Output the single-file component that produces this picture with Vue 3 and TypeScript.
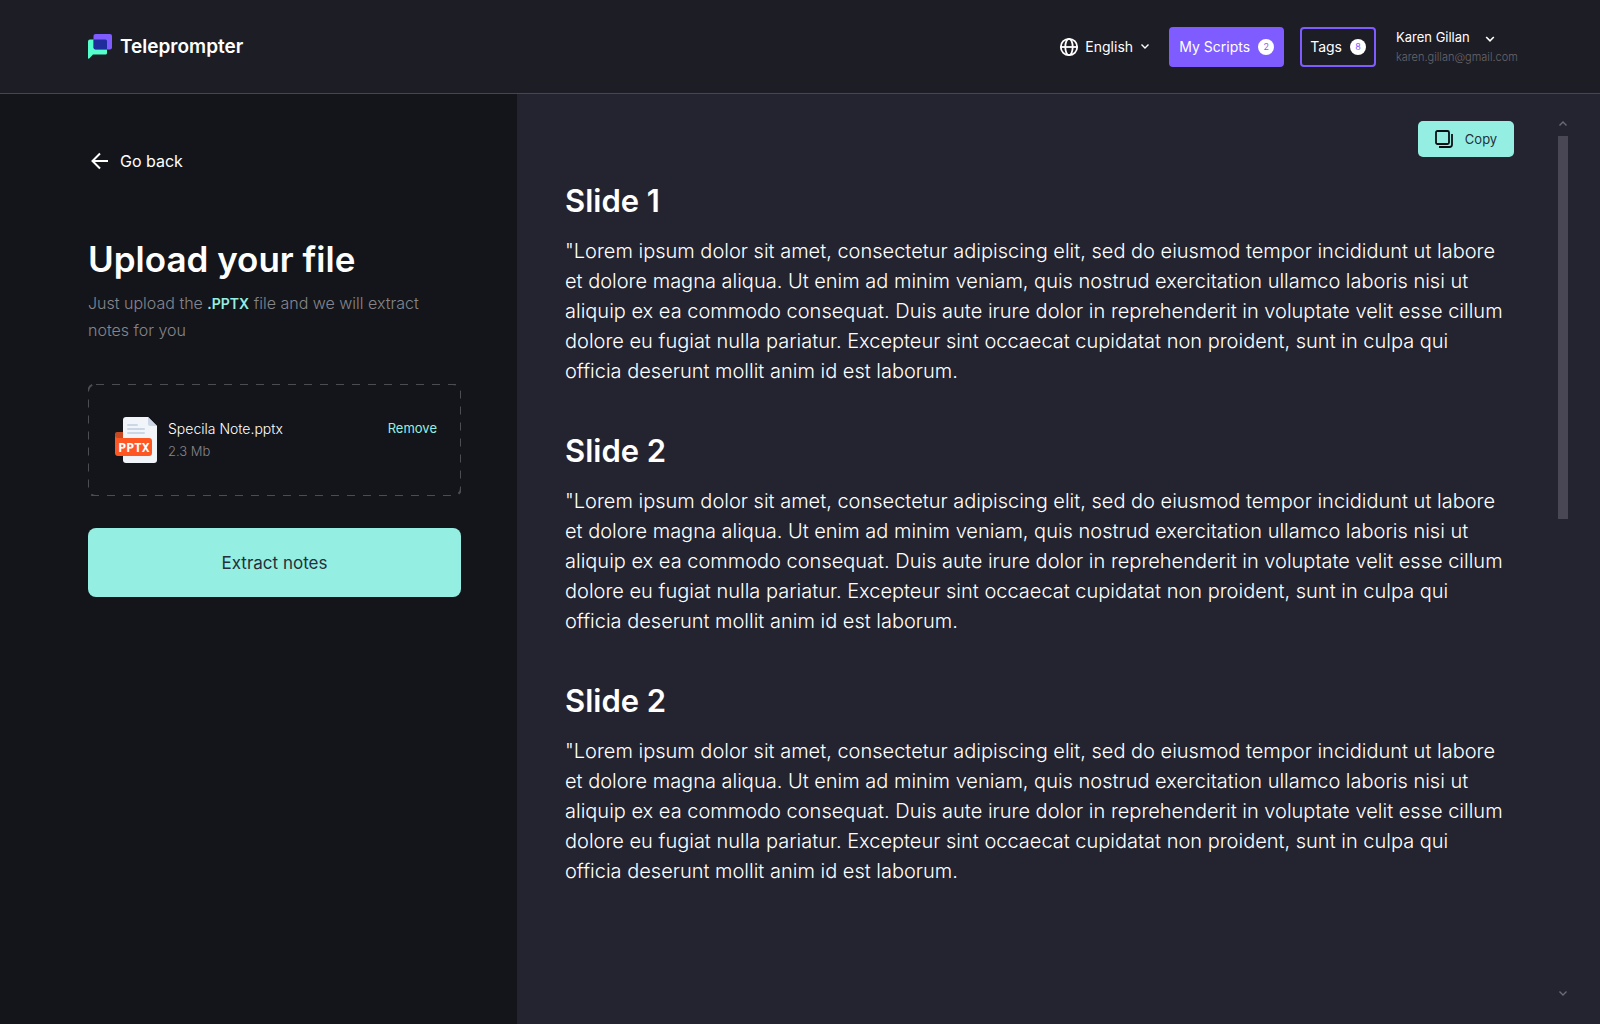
<script setup lang="ts">
interface Slide {
  id: number
  title: string
  lines: string[]
}

const notes: string[] = [
  '"Lorem ipsum dolor sit amet, consectetur adipiscing elit, sed do eiusmod tempor incididunt ut labore',
  'et dolore magna aliqua. Ut enim ad minim veniam, quis nostrud exercitation ullamco laboris nisi ut',
  'aliquip ex ea commodo consequat. Duis aute irure dolor in reprehenderit in voluptate velit esse cillum',
  'dolore eu fugiat nulla pariatur. Excepteur sint occaecat cupidatat non proident, sunt in culpa qui',
  'officia deserunt mollit anim id est laborum.',
]

const slides: Slide[] = [
  { id: 1, title: 'Slide 1', lines: notes },
  { id: 2, title: 'Slide 2', lines: notes },
  { id: 3, title: 'Slide 2', lines: notes },
]
</script>

<template>
  <div class="page">
    <header class="topbar">
      <a class="brand" href="#">
        <svg width="24" height="25" viewBox="0 0 24 25" aria-hidden="true">
          <path d="M2 5.500h15.500a1.500 1.500 0 0 1 1.500 1.500v12a1.500 1.500 0 0 1-1.500 1.500H5L1.200 24.500Q0 25 0 24V7.500a2 2 0 0 1 2-2z" fill="#54ffcb" />
          <rect x="5.500" y="0" width="18.500" height="15.500" rx="2" fill="#7f5cff" />
          <path d="M5.500 5.500H17.500a1.500 1.500 0 0 1 1.500 1.500v8.500H7.500a2 2 0 0 1-2-2z" fill="#1f2d9c" />
        </svg>
        <span>Teleprompter</span>
      </a>
      <nav class="tools">
        <label class="language">
          <svg width="20" height="20" viewBox="0 0 20 20" fill="none" stroke="#fff" stroke-width="1.800" aria-hidden="true">
            <circle cx="10" cy="10" r="8.200" />
            <ellipse cx="10" cy="10" rx="3.700" ry="8.200" />
            <path d="M2 10h16" />
          </svg>
          <select aria-label="Language">
            <option>English</option>
          </select>
          <svg width="8" height="5" viewBox="0 0 8 5" fill="none" stroke="#fff" stroke-width="1.400" aria-hidden="true">
            <path d="M.5.500 4 4 7.500.500" />
          </svg>
        </label>
        <button type="button" class="pill filled">My Scripts <span class="badge">2</span></button>
        <button type="button" class="pill">Tags <span class="badge">8</span></button>
        <button type="button" class="account">
          <span class="name">
            Karen Gillan
            <svg width="10" height="10" viewBox="0 0 10 10" fill="none" stroke="#fff" stroke-width="1.600" aria-hidden="true">
              <path d="M1.200 5 5 8.800 8.800 5" />
            </svg>
          </span>
          <span class="email">karen.gillan@gmail.com</span>
        </button>
      </nav>
    </header>

    <div class="body">
      <aside class="sidebar">
        <a class="back" href="#">
          <svg width="24" height="24" viewBox="0 0 24 24" fill="none" stroke="#fff" stroke-width="2" aria-hidden="true">
            <path d="M20 12H5M12 4.500 4.500 12l7.500 7.500" />
          </svg>
          Go back
        </a>
        <h1>Upload your file</h1>
        <p class="hint">Just upload the <strong>.PPTX</strong> file and we will extract notes for you</p>

        <div class="dropzone">
          <svg class="outline" aria-hidden="true">
            <rect x="0" y="0" width="100%" height="100%" rx="8" />
          </svg>
          <svg width="42" height="46" viewBox="0 0 42 46" aria-hidden="true">
            <path d="M0 17a2 2 0 0 1 2-2h7v10H0z" fill="#c54a22" />
            <path d="M11 0h22l9 9v34a3 3 0 0 1-3 3H11a3 3 0 0 1-3-3V3a3 3 0 0 1 3-3z" fill="#f1f5f9" />
            <path d="M33 0l9 9h-7a2 2 0 0 1-2-2z" fill="#cbd7e6" />
            <path d="M13 8h9M13 12h16M13 16h16" stroke="#cbd7e6" stroke-width="2" stroke-linecap="round" />
            <path d="M0 18a3 3 0 0 0 3 3h31a3 3 0 0 1 3 3v12a3 3 0 0 1-3 3H3a3 3 0 0 1-3-3z" fill="#ff5722" />
            <text x="19" y="35" text-anchor="middle" class="ext">PPTX</text>
          </svg>
          <div class="file">
            <span class="filename">Specila Note.pptx</span>
            <span class="filesize">2.3 Mb</span>
          </div>
          <button type="button" class="remove">Remove</button>
        </div>

        <button type="button" class="extract">Extract notes</button>
      </aside>

      <main class="notes">
        <div class="content">
          <button type="button" class="copy">
            <svg width="18" height="18" viewBox="0 0 18 18" fill="none" stroke="#0b1015" stroke-width="1.800" aria-hidden="true">
              <rect x="1" y="1" width="13" height="13" rx="1.500" />
              <path d="M17 4v10.500a2.500 2.500 0 0 1-2.500 2.500H4" />
            </svg>
            Copy
          </button>
          <section v-for="slide in slides" :key="slide.id" class="slide">
            <h2>{{ slide.title }}</h2>
            <p>{{ slide.lines.join('\n') }}</p>
          </section>
        </div>
        <div class="scrollbar" aria-hidden="true">
          <svg width="8" height="5" viewBox="0 0 8 5"><path d="M.5 4.500 4 1l3.500 3.500" /></svg>
          <div class="track"><div class="thumb"></div></div>
          <svg width="8" height="5" viewBox="0 0 8 5"><path d="M.5.500 4 4 7.500.500" /></svg>
        </div>
      </main>
    </div>
  </div>
</template>

<style>
body {
  margin: 0;
  background: #14151a;
}
</style>

<style scoped>
* {
  box-sizing: border-box;
}

.page {
  display: flex;
  flex-direction: column;
  min-height: 100vh;
  font-family: Inter, "Liberation Sans", sans-serif;
  color: #fff;
}

button,
select {
  padding: 0;
  border: 0;
  background: none;
  color: inherit;
  font: inherit;
  cursor: pointer;
}

a {
  color: inherit;
  text-decoration: none;
}

svg {
  flex: none;
  display: block;
}

.topbar {
  display: flex;
  justify-content: space-between;
  align-items: center;
  height: 94px;
  padding: 0 86px 0 88px;
  background: #1d1d25;
  border-bottom: 1px solid #46464f;
}

.brand {
  display: flex;
  align-items: center;
  gap: 8px;
  font-size: 19px;
  font-weight: 600;
}

.tools {
  display: flex;
  align-items: center;
}

.language {
  display: flex;
  align-items: center;
  gap: 6px;
  margin-right: 20px;
  font-size: 14px;
}

.language select {
  appearance: none;
  margin-right: 2px;
}

.pill {
  display: flex;
  align-items: center;
  gap: 8px;
  height: 40px;
  margin-right: 16px;
  padding: 0 8px;
  border: 2px solid #7f5cff;
  border-radius: 4px;
  font-size: 14px;
}

.pill.filled {
  background: #7f5cff;
}

.badge {
  width: 16px;
  height: 16px;
  border-radius: 50%;
  background: #fff;
  color: #7f5cff;
  font-size: 9px;
  line-height: 16px;
  text-align: center;
}

.account {
  display: flex;
  flex-direction: column;
  width: 118px;
  margin-left: 4px;
  text-align: left;
  white-space: nowrap;
}

.name {
  display: flex;
  align-items: center;
  gap: 15px;
  font-size: 13px;
  line-height: 20px;
}

.email {
  color: #66666d;
  font-size: 11px;
  font-weight: 300;
  line-height: 20px;
}

.body {
  flex: 1;
  display: flex;
}

.sidebar {
  width: 517px;
  flex: none;
  padding: 55px 56px 56px 88px;
  background: #14151a;
}

.back {
  display: inline-flex;
  align-items: center;
  gap: 8px;
  font-size: 16px;
  line-height: 24px;
}

h1 {
  margin: 59px 0 8px;
  font-size: 35px;
  font-weight: 600;
  line-height: 46px;
}

.hint {
  margin: 0 0 41px;
  color: #85858c;
  font-size: 16px;
  font-weight: 300;
  line-height: 26px;
}

.hint strong {
  color: #94efe2;
  font-size: 14px;
  font-weight: 600;
}

.dropzone {
  position: relative;
  display: flex;
  align-items: center;
  height: 112px;
  margin-bottom: 32px;
  padding: 0 24px 0 27px;
}

.outline {
  position: absolute;
  inset: 0;
  width: 100%;
  height: 100%;
}

.outline rect {
  fill: none;
  stroke: #4c4c53;
  stroke-width: 2;
  stroke-dasharray: 8 8;
}

.ext {
  fill: #fff;
  font-family: "DejaVu Sans Mono", monospace;
  font-size: 13px;
  font-weight: 700;
}

.file {
  display: flex;
  flex: 1;
  flex-direction: column;
  margin-left: 11px;
  font-size: 14px;
  font-weight: 300;
  line-height: 23px;
}

.filesize {
  color: #85858c;
  font-size: 13px;
}

.remove {
  align-self: flex-start;
  margin-top: 33px;
  color: #94efe2;
  font-size: 13px;
  line-height: 23px;
}

.extract {
  width: 100%;
  height: 69px;
  border-radius: 8px;
  background: #94efe2;
  color: #25303a;
  font-size: 17px;
}

.notes {
  flex: 1;
  display: flex;
  justify-content: space-between;
  min-width: 0;
  padding: 27px 32px 0 48px;
  background: #242430;
}

.content {
  display: flex;
  flex: 1;
  flex-direction: column;
  margin-right: 44px;
}

.copy {
  display: flex;
  align-items: center;
  align-self: flex-end;
  justify-content: center;
  gap: 12px;
  width: 96px;
  height: 36px;
  margin-bottom: 24px;
  border-radius: 5px;
  background: #94efe2;
  color: #25303a;
  font-size: 13px;
}

.slide {
  margin-bottom: 45px;
}

h2 {
  margin: 0 0 15px;
  font-size: 31px;
  font-weight: 600;
  line-height: 40px;
}

.slide p {
  margin: 0;
  font-size: 20px;
  font-weight: 300;
  line-height: 30px;
  white-space: pre-line;
}

.scrollbar {
  display: flex;
  flex-direction: column;
  align-items: center;
  gap: 10px;
  width: 10px;
  padding-bottom: 28px;
}

.scrollbar path {
  fill: none;
  stroke: #6a6a76;
  stroke-width: 1.400;
}

.track {
  display: flex;
  flex: 1;
  flex-direction: column;
  width: 10px;
}

.thumb {
  height: 383px;
  background: #484753;
}
</style>
